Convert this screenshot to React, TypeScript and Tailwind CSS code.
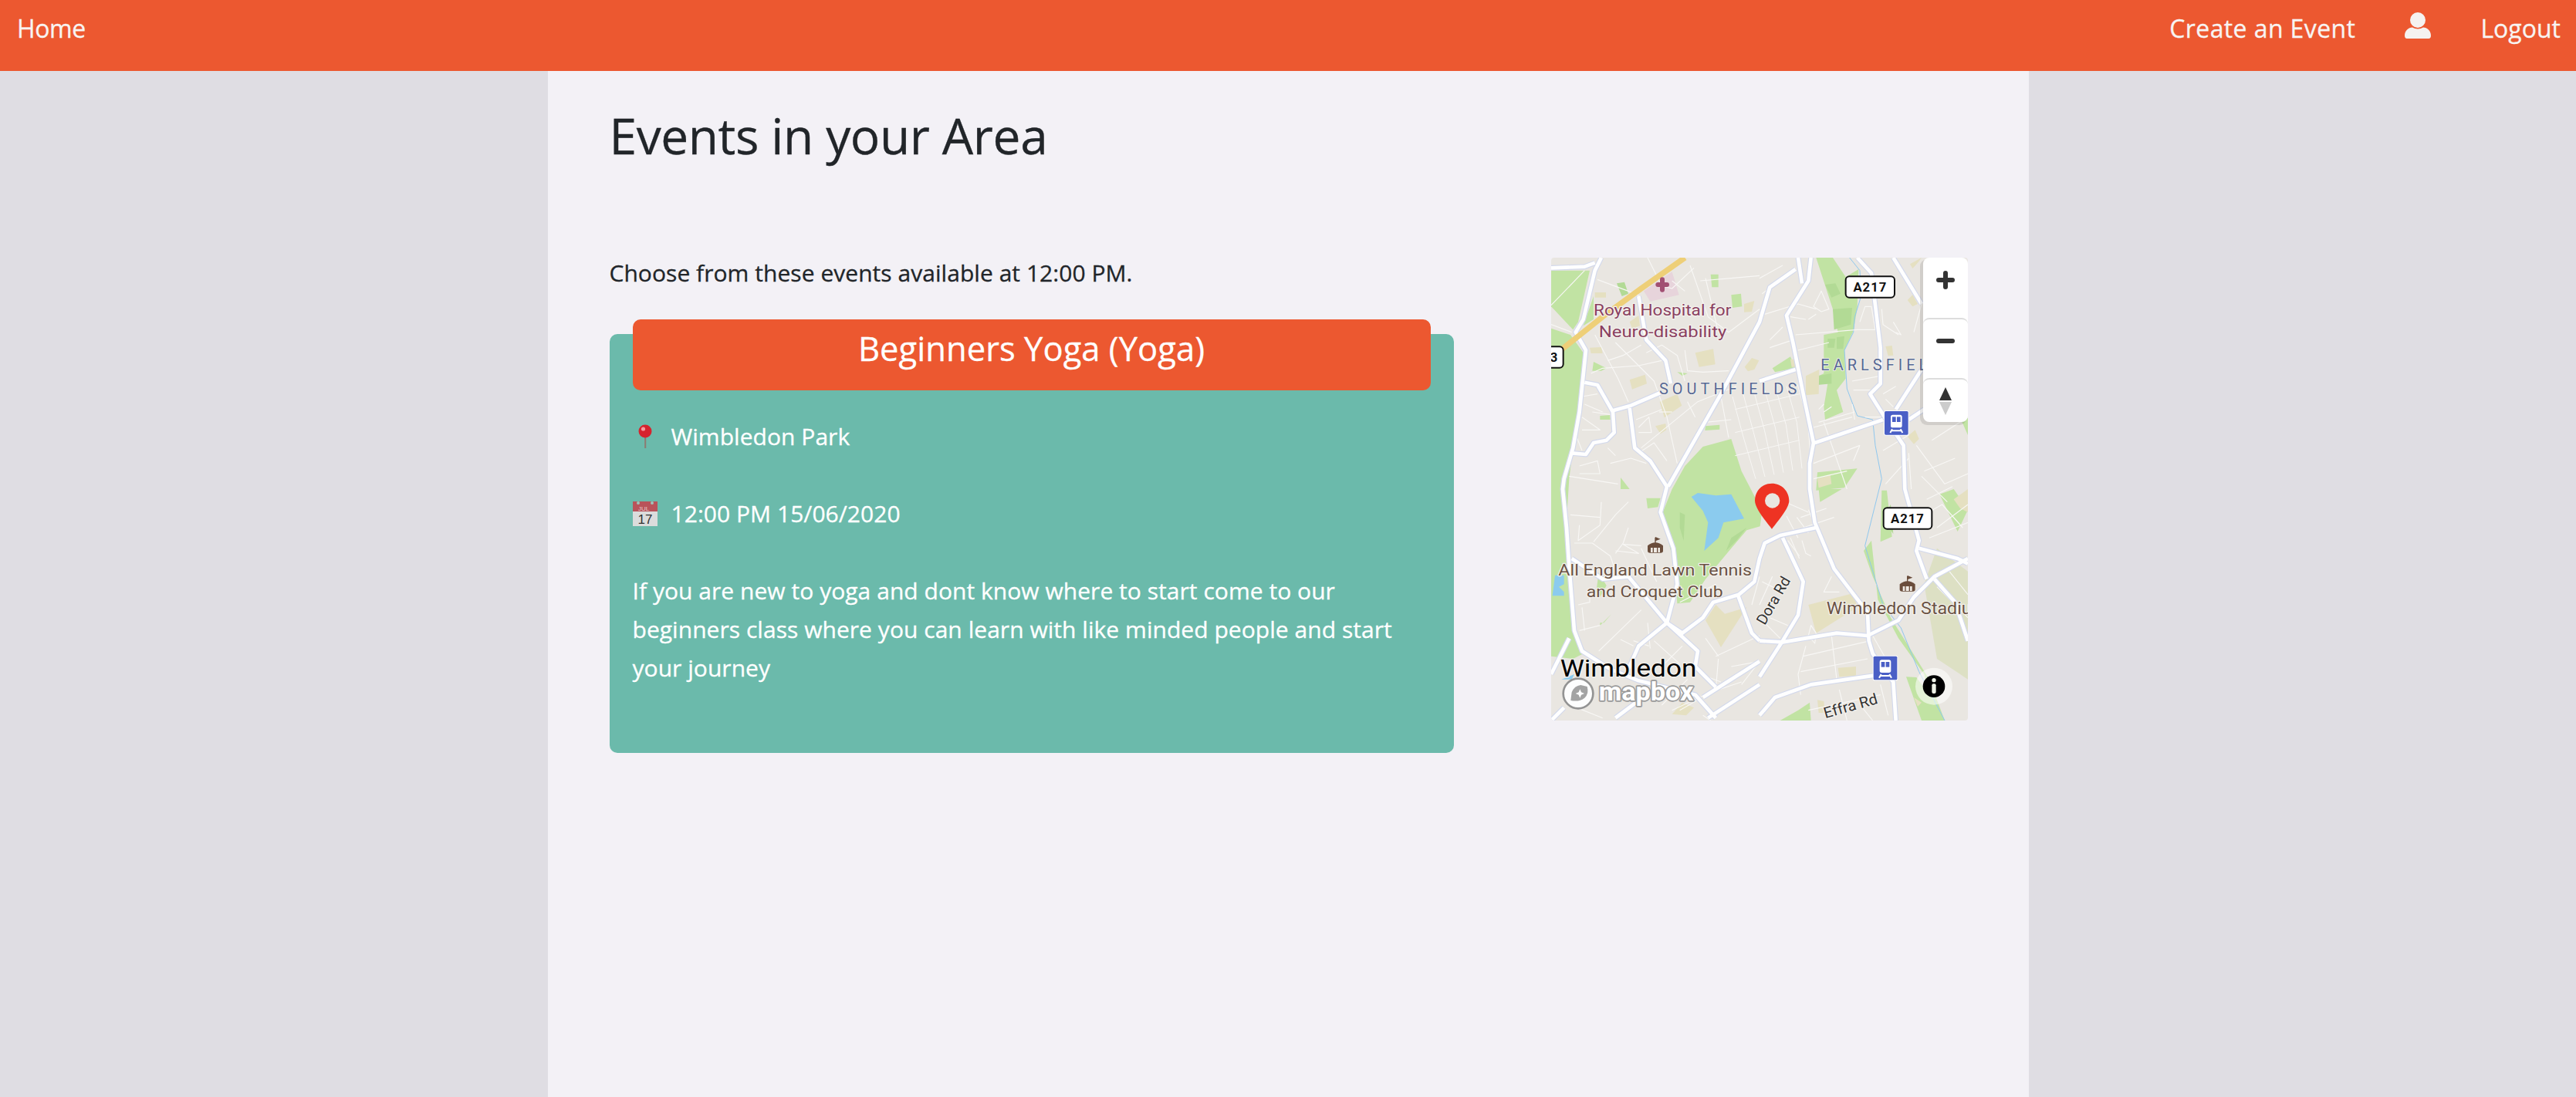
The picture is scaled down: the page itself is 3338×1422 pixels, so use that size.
import React from "react";

const GREEN = "#c1e3a3";
const GREEN2 = "#b2da95";
const SAND = "#e5e0c1";
const WATER = "#8bcbee";
const LAND = "#e9e6e1";

const greens = [
  "M0 50L150 50L105 250L85 280L0 190Z",
  "M125 265L165 150L165 240Z",
  "M0 275L75 300L125 370L100 620L70 860L55 1100L75 1300L95 1470L125 1540L85 1560L0 1550Z",
  "M470 900L520 810L590 735L700 705L740 830L820 985L812 1045L760 1060L700 1130L600 1250L540 1340L490 1345L480 1200L430 1000Z",
  "M1030 0L1095 0L1145 75L1195 45L1190 195L1175 285L1140 360L1145 470L1110 515L1135 600L1065 630L1060 580L1075 490L1032 490L1030 465L1060 450L1060 300L1115 290L1095 200Z",
  "M860 430L930 385L950 430L870 445Z",
  "M1035 835L1190 820L1140 895L1030 905Z",
  "M1040 900L1130 900L1045 950Z",
  "M1285 905L1305 905L1325 1085L1280 1105Z",
  "M1510 920L1565 900L1620 980L1580 1065Z",
  "M1215 1140L1245 1100L1270 1330L1350 1480L1450 1620L1490 1800L1530 1800L1470 1640L1370 1480L1320 1400L1250 1240Z",
  "M1380 1630L1420 1632L1470 1700L1520 1800L1440 1800Z",
  "M1580 600L1620 620L1620 690Z",
  "M890 1800L960 1760L1005 1730L1010 1800Z",
  "M190 1430L235 1385L205 1420L190 1420Z",
  "M370 935L425 935L415 970L375 975Z",
  "M185 1225L215 1275L190 1320L175 1300Z",
  "M620 65L650 65L650 115L625 115Z",
  "M700 145L738 140L742 190L705 195Z",
  "M165 405L215 430L195 440L160 440Z",
  "M490 445L530 450L510 460Z",
  "M600 655L655 650L655 668L598 672Z",
  "M190 615L228 612L230 630L190 630Z",
  "M270 855L305 900L270 900Z",
  "M480 1430L510 1450L500 1455Z",
];
const darkGreens = [
  "M255 100L285 95L300 140L275 150Z",
  "M1065 105L1105 100L1125 140L1090 155Z",
  "M1095 200L1170 195L1165 260L1100 280Z",
  "M1075 315L1105 315L1100 350L1075 350Z",
  "M1110 310L1140 305L1135 355L1110 355Z",
  "M1035 460L1090 450L1090 490L1035 495Z",
  "M500 990L520 1000L515 1100L500 1050Z",
  "M700 1090L760 1050L720 1100L680 1140Z",
  "M1290 1010L1320 960L1330 1075Z",
];
const sands = [
  "M170 135L213 135L213 155L170 155Z",
  "M305 250L340 225L345 265L315 275Z",
  "M150 350L195 348L200 372L155 372Z",
  "M560 370L630 355L638 415L575 425Z",
  "M750 180L790 168L780 210L750 212Z",
  "M752 425L780 390L808 400L790 435L765 442Z",
  "M305 475L365 455L372 490L315 512Z",
  "M422 560L490 530L508 575L440 622Z",
  "M405 655L445 645L448 670L425 685Z",
  "M990 460L1042 435L1040 530L990 535Z",
  "M930 395L950 395L955 425L935 425Z",
  "M1300 345L1325 342L1330 380L1310 382Z",
  "M1395 25L1440 0L1425 20L1405 42Z",
  "M1385 165L1405 145L1425 180L1405 190Z",
  "M1035 860L1085 845L1090 880L1040 895Z",
  "M1385 695L1415 670L1430 705L1410 725Z",
  "M1565 940L1620 900L1620 990L1590 975Z",
  "M600 1410L640 1350L675 1385L760 1360L660 1515Z",
  "M1115 1595L1185 1590L1185 1625L1120 1630Z",
  "M470 1775L510 1730L555 1750L525 1780Z",
  "M1035 1720L1060 1725L1065 1770L1040 1770Z",
  "M1410 1710L1440 1730L1425 1745Z",
  "M1000 1350L1175 1305L1190 1360L1030 1460Z",
];

const majors = [
  "M195 0L170 50L125 240L95 290L135 360L110 600L85 740L50 860L45 900L60 1050L70 1200L90 1450L120 1530L230 1600L340 1645L560 1700L640 1790",
  "M0 40L130 35L170 20",
  "M130 485L180 495L240 600L245 680L215 710L165 720L135 765L80 760",
  "M240 595L310 575L425 525",
  "M340 150L370 320L445 400L465 490",
  "M305 585L325 740L385 790L450 890L425 990L475 1130L490 1270L450 1420L340 1510L300 1600",
  "M455 890L660 530L810 250L850 115L950 45",
  "M960 0L975 100",
  "M1010 0L1000 90L915 225L940 330L980 530L1020 720L1005 800L1005 900L1025 1030L1100 1210L1230 1380L1235 1490L1250 1540L1330 1650L1340 1800",
  "M1190 0L1245 60L1280 350L1280 490L1240 530L1290 610L1370 730L1375 900L1430 1100L1420 1140L1460 1250",
  "M1430 1130L1580 1170L1620 1190",
  "M1025 720L1290 630",
  "M810 480L950 435",
  "M1340 590L1430 450L1450 420",
  "M1390 630L1450 590",
  "M1330 0L1440 180",
  "M1030 1050L890 1080L830 1110L810 1170L790 1260L730 1310L630 1340L590 1400L510 1460L450 1420",
  "M900 1090L980 1260L960 1390L900 1490L810 1630",
  "M810 1490L900 1495L1110 1460L1230 1470L1350 1410L1410 1320L1490 1240L1620 1170",
  "M810 1780L870 1710L1010 1660L1255 1625",
  "M1490 1250L1570 1340L1620 1490",
  "M725 1310L780 1460L810 1490",
  "M300 1240L450 1420L570 1530L560 1590L640 1670",
  "M80 1170L200 1250L300 1240",
  "M590 1710L810 1570",
  "M610 1790L810 1660",
  "M0 1620L70 1480",
  "M0 1800L50 1750",
  "M250 1790L330 1730",
  "M1520 0L1620 80",
];

const minors = [
  "M180 85L300 130L345 150", "M375 0L430 110L470 120L555 40", "M0 185L130 50", "M0 260L80 290", "M540 30L610 230L690 290L810 200",
  "M580 90L700 80L810 70", "M600 80L650 290", "M470 90L520 130", "M170 300L260 470L300 560", "M155 450L200 430L340 420L430 400",
  "M220 400L280 380L350 340", "M250 330L400 480L450 620L490 800", "M370 370L430 340L490 380L520 480", "M520 360L530 440L590 445L690 440",
  "M120 540L180 530", "M130 570L200 600", "M160 600L230 610", "M120 620L190 670L120 670", "M100 700L120 750", "M110 810L180 790L190 840L110 840",
  "M70 850L260 880", "M230 800L310 780L370 800", "M330 630L430 590", "M340 660L380 620L390 680L340 680", "M340 760L400 720L450 790", "M350 740L570 560L720 500",
  "M420 600L470 600", "M220 740L250 770", "M530 560L560 620", "M600 640L700 630", "M660 540L690 700",
  "M810 80L900 30", "M820 140L890 90", "M830 220L960 180L1030 200", "M930 230L990 240", "M950 300L1190 280L1260 280", "M960 360L1080 330", "M850 320L900 270", "M850 350L940 320",
  "M1000 240L1030 220", "M1020 190L1050 130L1080 200L1050 210Z", "M1200 250L1220 190L1245 190L1260 280", "M1170 480L1280 460", "M1175 515L1250 515", "M1170 570L1180 630", "M1220 620L1340 620", "M1040 640L1180 600", "M1020 660L1170 620",
  "M1060 640L1150 900", "M1020 800L1200 730", "M1020 860L1150 830", "M1200 730L1175 790", "M1090 580L1060 600", "M1040 590L1060 570",
  "M1285 200L1290 260L1350 300", "M1330 250L1360 300L1340 290", "M1290 530L1340 500", "M1300 550L1330 580",
  "M1440 180L1410 290", "M1290 750L1390 690", "M1300 880L1390 780", "M1390 760L1400 900", "M1420 730L1530 880L1620 840", "M1480 710L1620 620", "M1450 830L1570 780", "M1440 850L1540 950", "M1460 940L1560 890", "M1500 1050L1620 960", "M1430 1010L1520 960L1600 1050", "M1470 1090L1620 1030",
  "M970 1010L1070 975", "M980 1050L1100 1010", "M1000 980L1030 1050", "M915 1005L960 1090", "M955 1010L1000 1070", "M910 950L1000 990",
  "M930 1090L965 1170", "M975 1100L990 1150L1010 1160", "M920 1100L965 1160",
  "M1090 1240L1060 1300L1120 1300", "M1010 1430L1000 1470L1025 1500L1030 1460Z",
  "M990 1510L960 1620L970 1700", "M1090 1470L1110 1640", "M980 1550L1240 1490", "M970 1610L1230 1560", "M1250 1470L1330 1610", "M1120 1680L1150 1800", "M1000 1760L1280 1700", "M1280 1660L1310 1780",
  "M1210 1750L1250 1800", "M1540 1210L1620 1310", "M1500 1280L1620 1400",
  "M75 1000L190 1010", "M110 1040L105 1100L190 1040L195 950", "M90 1110L160 1110L230 1160L250 1220", "M165 1105L250 1000L300 950", "M250 1150L280 1110L300 1050", "M250 1140L340 1150L280 1115L350 1120", "M350 1130L410 1260", "M105 1350L150 1340L150 1300",
  "M120 1360L130 1450", "M110 1450L190 1430", "M185 1530L350 1370", "M270 1485L320 1510", "M320 1490L380 1510", "M375 1420L385 1520", "M400 1490L500 1580", "M430 1590L510 1510",
  "M600 1480L650 1550", "M650 1560L640 1680", "M640 1550L810 1470", "M700 1590L810 1570L740 1660", "M580 1620L660 1650", "M500 1340L640 1270",
  "M810 1240L780 1350", "M860 1240L810 1350", "M820 1260L900 1300", "M850 1400L920 1430", "M830 1420L890 1480", "M470 1760L620 1690L740 1650", "M430 1740L530 1640", "M100 1750L200 1790", "M590 1780L620 1800", "M500 1760L570 1720",
];
const streets = [0, 1, 2, 3, 4, 5, 6];

function Shield({ x, y, w, label }: { x: number; y: number; w: number; label: string }) {
  return (
    <g>
      <rect x={x} y={y} width={w} height={82} rx={14} fill="#fff" stroke="#111" strokeWidth={6} />
      <text x={x + w / 2} y={y + 60} textAnchor="middle" fontSize={50} fontWeight={700} fill="#111" letterSpacing={3} fontFamily="Roboto, sans-serif">{label}</text>
    </g>
  );
}

function Train({ x, y }: { x: number; y: number }) {
  return (
    <g transform={`translate(${x} ${y})`}>
      <rect x={-3} y={-3} width={98} height={98} rx={8} fill="#fff" opacity={0.9} />
      <rect width={92} height={92} rx={5} fill="#4a5fc6" />
      <rect x={24} y={14} width={44} height={50} rx={8} fill="#fff" />
      <rect x={30} y={22} width={14} height={20} fill="#4a5fc6" />
      <rect x={48} y={22} width={14} height={20} fill="#4a5fc6" />
      <path d="M30 70L22 84M62 70L70 84M24 76L68 76" stroke="#fff" strokeWidth={6} fill="none" />
    </g>
  );
}

function Stadium({ x, y }: { x: number; y: number }) {
  return (
    <g transform={`translate(${x} ${y})`}>
      <path d="M0 -30L0 -8" stroke="#6a4d3c" strokeWidth={4} />
      <path d="M0 -32L20 -24L0 -16Z" fill="#6a4d3c" />
      <path d="M-30 2Q0 -22 30 2L30 22Q30 30 20 30L-20 30Q-30 30 -30 22Z" fill="#6a4d3c" />
      <rect x={-18} y={10} width={36} height={18} fill="#efeae4" />
      <path d="M-8 10V28M8 10V28" stroke="#6a4d3c" strokeWidth={4} />
    </g>
  );
}

function Label(props: React.SVGProps<SVGTextElement> & { children: React.ReactNode; halo?: string; haloW?: number }) {
  const { halo = "#f3f1ed", haloW = 7, children, ...rest } = props;
  return (
    <text stroke={halo} strokeWidth={haloW} paintOrder="stroke" strokeLinejoin="round" fontFamily="Roboto, sans-serif" {...rest}>
      {children}
    </text>
  );
}

function MapArt() {
  return (
    <svg viewBox="0 0 1620 1800" className="block w-[540px] h-[600px]">
      <rect width={1620} height={1800} fill={LAND} />
      <path d="M1450 1270L1500 1130L1620 1220L1620 1640L1500 1560Z" fill="#dde0c4" />
      {greens.map((d, i) => <path key={i} d={d} fill={GREEN} />)}
      {darkGreens.map((d, i) => <path key={i} d={d} fill={GREEN2} />)}
      {sands.map((d, i) => <path key={i} d={d} fill={SAND} />)}
      <path d="M360 130L470 55L497 145L385 170Z" fill="#e7d4db" />
      <path d="M545 930L570 915L640 925L700 920L750 1015L670 1030L650 1090L595 1140L610 1030L590 985Z" fill={WATER} />
      <path d="M15 1235L50 1235L50 1270L30 1280L50 1300L50 1315L5 1315Z" fill={WATER} />
      <path d="M40 1640L90 1620L80 1640Z" fill={WATER} />
      <path d="M1160 0L1200 50L1205 150L1180 230L1175 290L1140 360L1150 510L1190 615L1250 630L1260 730L1285 860L1220 1120L1290 1350L1360 1440L1430 1610L1530 1800" fill="none" stroke="#8fc7ee" strokeWidth={3} />
      {streets.map((i) => (
        <path key={`s${i}`} d={`M${705 + i * 42} ${540 - i * 8}L${745 + i * 42} ${690 - i * 10}L${795 + i * 36} ${860 - i * 8}`} fill="none" stroke="#f8f7f5" strokeWidth={3} />
      ))}
      {[590, 680, 770].map((y) => (
        <path key={`c${y}`} d={`M715 ${y}L965 ${y - 60}`} fill="none" stroke="#f8f7f5" strokeWidth={3} />
      ))}
      {minors.map((d, i) => <path key={i} d={d} fill="none" stroke="#f8f7f5" strokeWidth={3.500} strokeLinejoin="round" />)}
      {majors.map((d, i) => <path key={`c${i}`} d={d} fill="none" stroke="#d3d9ec" strokeWidth={21} strokeLinejoin="round" />)}
      {majors.map((d, i) => <path key={`w${i}`} d={d} fill="none" stroke="#fff" strokeWidth={14} strokeLinejoin="round" />)}
      <path d="M520 0L350 120L200 230L50 350L0 385" fill="none" stroke="#eecf78" strokeWidth={22} />

      <path d="M415 105H450M432 85V125" stroke="#a14f72" strokeWidth={18} strokeLinecap="round" />
      <Label x={165} y={225} fontSize={62} fill="#8a4060" textLength={535} lengthAdjust="spacingAndGlyphs">Royal Hospital for</Label>
      <Label x={185} y={310} fontSize={62} fill="#8a4060" textLength={497} lengthAdjust="spacingAndGlyphs">Neuro-disability</Label>
      <Label x={420} y={530} fontSize={60} fill="#566894" haloW={5} textLength={535}>SOUTHFIELDS</Label>
      <Label x={1048} y={438} fontSize={60} fill="#566894" letterSpacing={15} haloW={5}>EARLSFIELD</Label>
      <Label x={28} y={1235} fontSize={62} fill="#6a5244" textLength={752} lengthAdjust="spacingAndGlyphs">All England Lawn Tennis</Label>
      <Label x={137} y={1320} fontSize={62} fill="#6a5244" textLength={531} lengthAdjust="spacingAndGlyphs">and Croquet Club</Label>
      <Label x={1070} y={1385} fontSize={64} fill="#6a5244" textLength={625} lengthAdjust="spacingAndGlyphs">Wimbledon Stadium</Label>
      <Label x={0} y={0} fontSize={58} fill="#333" transform="translate(830 1432) rotate(-60)" textLength={205} lengthAdjust="spacingAndGlyphs">Dora Rd</Label>
      <Label x={0} y={0} fontSize={58} fill="#333" transform="translate(1066 1792) rotate(-16)" textLength={215} lengthAdjust="spacingAndGlyphs">Effra Rd</Label>
      <Label x={35} y={1630} fontSize={94} fill="#000" haloW={8} textLength={530} lengthAdjust="spacingAndGlyphs">Wimbledon</Label>

      <Stadium x={405} y={1118} />
      <Stadium x={1385} y={1268} />
      <Shield x={1145} y={73} w={190} label="A217" />
      <Shield x={1292} y={973} w={188} label="A217" />
      <Shield x={-60} y={346} w={107} label="A3" />
      <Train x={1296} y={597} />
      <Train x={1253} y={1550} />

      <path d="M858 878C820 878 792 908 792 945C792 975 835 1025 858 1055C881 1025 925 975 925 945C925 908 896 878 858 878Z" fill="#ee3323" />
      <circle cx={860} cy={945} r={29} fill={LAND} />

      <circle cx={105} cy={1695} r={58} fill="#fff" stroke="#8f8f8f" strokeWidth={8} opacity={0.95} />
      <path d="M76 1722L80 1690Q90 1665 115 1662L140 1668Q148 1695 130 1712Q110 1728 76 1722Z" fill="#a3a3a3" />
      <path d="M112 1678L117 1690L129 1695L117 1700L112 1712L107 1700L95 1695L107 1690Z" fill="#fff" />
      <text x={185} y={1722} fontSize={98} fontWeight={700} fill="#fff" stroke="#9a9a9a" strokeWidth={10} paintOrder="stroke" strokeLinejoin="round" fontFamily="Roboto, sans-serif" textLength={368} lengthAdjust="spacingAndGlyphs">mapbox</text>

      <circle cx={1488} cy={1667} r={72} fill="#fff" opacity={0.55} />
      <circle cx={1488} cy={1667} r={43} fill="#000" />
      <circle cx={1488} cy={1643} r={8} fill="#f0f4e8" />
      <rect x={1480} y={1657} width={16} height={38} rx={6} fill="#f0f4e8" />
    </svg>
  );
}

function MapControls() {
  return (
    <div className="absolute top-0 right-0 w-[58px] rounded-[8px] bg-white shadow-[-3px_3px_0_1px_rgba(0,0,0,0.1)]">
      <div className="h-[78px] flex items-start justify-center pt-[17px]">
        <svg width="24" height="24" viewBox="0 0 24 24"><path d="M3 12H21M12 3V21" stroke="#333" strokeWidth="6" strokeLinecap="round" /></svg>
      </div>
      <div className="h-[78px] flex items-start justify-center pt-[16px] border-t-2 border-[#ddd] rounded-t-[8px]">
        <svg width="24" height="24" viewBox="0 0 24 24"><path d="M3 12H21" stroke="#333" strokeWidth="6" strokeLinecap="round" /></svg>
      </div>
      <div className="h-[57px] flex items-start justify-center pt-[10px] border-t-2 border-[#ddd] rounded-t-[8px]">
        <svg width="16" height="36" viewBox="0 0 16 36"><path d="M8 0L16 17H0Z" fill="#333" /><path d="M8 36L16 19H0Z" fill="#ccc" /></svg>
      </div>
    </div>
  );
}

function PinEmoji() {
  return (
    <svg width="32" height="32" viewBox="0 0 32 32" className="shrink-0">
      <rect x="15.2" y="12" width="2" height="19" fill="#8d7b72" />
      <circle cx="16" cy="9" r="8.5" fill="#d5232e" />
      <circle cx="13.5" cy="6" r="2.6" fill="#f59aa0" />
    </svg>
  );
}

function CalendarEmoji() {
  return (
    <svg width="32" height="32" viewBox="0 0 32 32" className="shrink-0">
      <rect y="0" width="32" height="32" fill="#dcdcdc" />
      <rect y="0" width="32" height="13" fill="#b9535a" />
      <circle cx="7" cy="2" r="2" fill="#9fc4bb" />
      <circle cx="25" cy="2" r="2" fill="#9fc4bb" />
      <text x="7" y="12" fontSize="8" fill="#e8c9c9" fontFamily="Liberation Sans, sans-serif">JUL</text>
      <text x="16" y="29" textAnchor="middle" fontSize="17" fill="#333" fontFamily="Liberation Sans, sans-serif">17</text>
    </svg>
  );
}

export default function App() {
  return (
    <div className="min-h-[1422px] bg-[#dfdde3] [font-family:'Open_Sans',sans-serif] [-webkit-text-stroke:0.3px]">
      <nav className="h-[92px] bg-[#ec5830] flex items-start justify-between pl-[22px] pr-[20px] text-[#f8f4f2] text-[32px] leading-[74px]">
        <a className="tracking-[-0.4px]">Home</a>
        <div className="flex items-start">
          <a className="tracking-[0.4px]">Create an Event</a>
          <svg width="34" height="34" viewBox="0 0 34 34" className="ml-[64px] mt-[16px]">
            <circle cx="17" cy="10" r="10" fill="#f5f2f0" />
            <path d="M0 30C0 24 5 19.500 10 19.500C14 22 20 22 24 19.500C29 19.500 34 24 34 30Q34 34 31 34H3Q0 34 0 30Z" fill="#f5f2f0" />
          </svg>
          <a className="ml-[64px]">Logout</a>
        </div>
      </nav>
      <main className="w-[1919px] min-h-[1330px] mx-auto bg-[#f3f1f6] px-[80px] text-[#212529]">
        <h1 className="text-[64px] leading-[88px] pt-[40px] tracking-[-0.4px]">Events in your Area</h1>
        <div className="flex justify-between mt-[114px]">
          <div className="w-[1094px]">
            <p className="text-[30px] leading-[40px] tracking-[0.04px]">Choose from these events available at 12:00 PM.</p>
            <article className="relative mt-[59px] h-[543px] bg-[#6bbaab] rounded-[10px] px-[30px] text-white text-[30px] leading-[50px] tracking-[0.04px]">
              <h2 className="absolute -top-[19px] left-[30px] right-[30px] h-[92px] bg-[#ec5830] rounded-[10px] text-center text-[43.500px] leading-[76px]">Beginners Yoga (Yoga)</h2>
              <div className="pt-[108px]">
                <div className="flex items-center gap-[18px] h-[50px]"><PinEmoji /><span>Wimbledon Park</span></div>
                <div className="flex items-center gap-[18px] h-[50px] mt-[50px]"><CalendarEmoji /><span>12:00 PM 15/06/2020</span></div>
                <p className="mt-[50px]">If you are new to yoga and dont know where to start come to our beginners class where you can learn with like minded people and start your journey</p>
              </div>
            </article>
          </div>
          <div className="relative w-[540px] h-[600px] mr-[-1px] overflow-hidden rounded-[4px]">
            <MapArt />
            <MapControls />
          </div>
        </div>
      </main>
    </div>
  );
}
